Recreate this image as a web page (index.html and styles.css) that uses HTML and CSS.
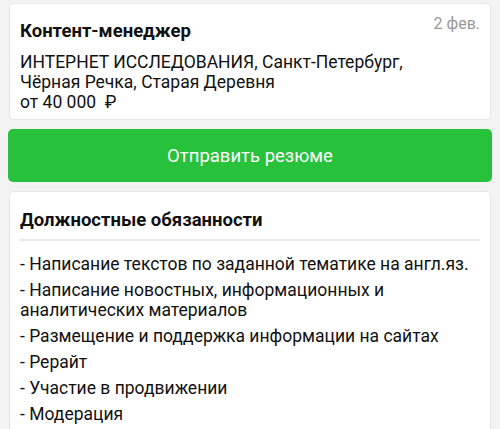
FILE: index.html
```html
<!DOCTYPE html>
<html lang="ru">

<head>
	<meta charset="UTF-8">
	<meta name="viewport" content="width=device-width, initial-scale=1.0">
	<title>Вакансия</title>
	<link rel="stylesheet" href="styles.css">
</head>

<body>
	<div class="page">
		<div class="card vacancy">
			<div class="vacancy-head">
				<h1 class="vacancy-title">Контент-менеджер</h1>
				<span class="vacancy-date">2 фев.</span>
			</div>
			<p class="vacancy-info">ИНТЕРНЕТ ИССЛЕДОВАНИЯ, Санкт-Петербург, Чёрная Речка, Старая Деревня</p>
			<p class="vacancy-info">от 40 000&nbsp; ₽</p>
		</div>

		<button class="btn-send" type="button">Отправить резюме</button>

		<div class="card duties">
			<h2 class="duties-title">Должностные обязанности</h2>
			<ul class="duties-list">
				<li>- Написание текстов по заданной тематике на англ.яз.</li>
				<li>- Написание новостных, информационных и аналитических материалов</li>
				<li>- Размещение и поддержка информации на сайтах</li>
				<li>- Рерайт</li>
				<li>- Участие в продвижении</li>
				<li>- Модерация</li>
			</ul>
		</div>
	</div>
</body>

</html>
```

FILE: styles.css
```css
* {
	margin: 0;
	padding: 0;
	box-sizing: border-box;
}

body {
	background: #f3f3f3;
	font-family: Roboto, "Noto Sans", sans-serif;
	color: #111;
	overflow: hidden;
}

.page {
	display: flex;
	flex-direction: column;
	gap: 9px;
	padding: 3px 9px 0;
}

.card {
	background: #fff;
	border: 1px solid #e6e6e6;
	border-radius: 4px;
}

.vacancy {
	padding: 8px 10px 7px;
}

.vacancy-head {
	display: flex;
	justify-content: space-between;
	align-items: flex-start;
	margin-bottom: 9px;
}

.vacancy-title {
	font-size: 18.5px;
	font-weight: bold;
	line-height: 24px;
	padding-top: 7px;
}

.vacancy-date {
	font-size: 16px;
	color: #999;
	line-height: 20px;
	padding-top: 2px;
}

.vacancy-info {
	max-width: 420px;
	font-size: 17.5px;
	line-height: 20px;
}

.btn-send {
	height: 53px;
	margin: 0 -1px;
	border: none;
	border-radius: 5px;
	background: #27c13b;
	color: #fff;
	font-family: inherit;
	font-size: 18.5px;
}

.duties {
	padding: 15px 10px 10px;
}

.duties-title {
	font-size: 18.5px;
	font-weight: bold;
	line-height: 26px;
	padding-bottom: 6px;
	border-bottom: 2px solid #e8e8e8;
}

.duties-list {
	list-style: none;
	padding-top: 13px;
}

.duties-list li {
	font-size: 17.5px;
	line-height: 20px;
	margin-bottom: 6px;
}
```
